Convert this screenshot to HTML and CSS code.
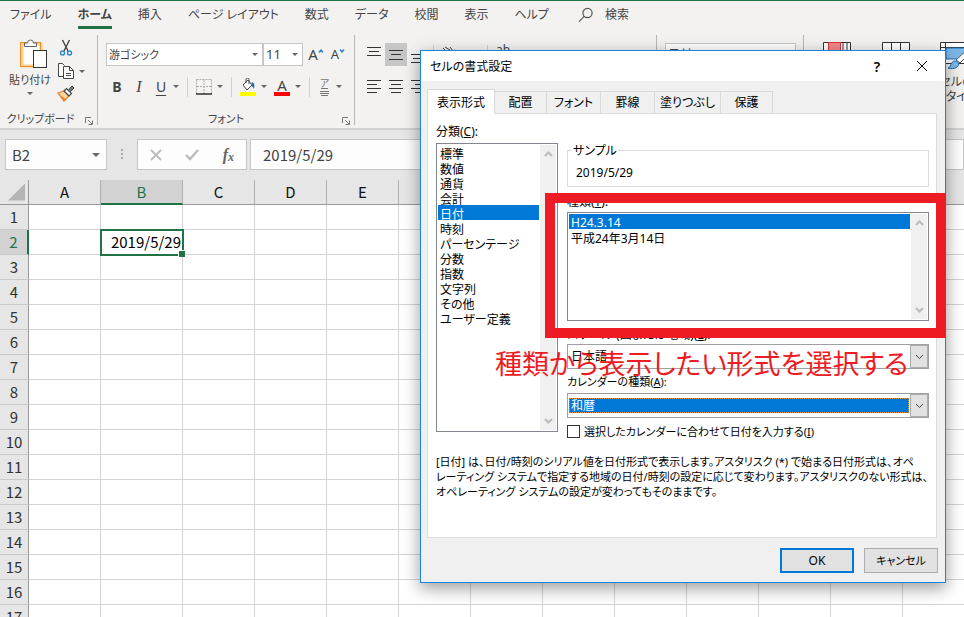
FILE: index.html
```html
<!DOCTYPE html>
<html lang="ja">
<head>
<meta charset="utf-8">
<title>セルの書式設定</title>
<link rel="stylesheet" href="styles.css">
</head>
<body>
<div class="app">
  <nav class="menu">
    <button>ファイル</button>
    <button class="current">ホーム</button>
    <button>挿入</button>
    <button>ページ レイアウト</button>
    <button>数式</button>
    <button>データ</button>
    <button>校閲</button>
    <button>表示</button>
    <button>ヘルプ</button>
    <button class="search"><svg width="16" height="16" viewBox="0 0 16 16" fill="none" stroke="#555" stroke-width="1.2"><circle cx="9.500" cy="6" r="4.600"/><path d="M6.200 9.300L1 14.600"/></svg>検索</button>
  </nav>

  <div class="ribbon">
    <section class="group clipboard">
      <div class="group-body">
        <button class="paste">
          <svg width="30" height="32" viewBox="0 0 30 32" fill="none"><rect x="2" y="5" width="19" height="22" fill="#fff" stroke="#f9d08b" stroke-width="3"/><rect x=".5" y="3.500" width="20" height="24" stroke="#e8912d"/><path d="M4.500 7.500V4h3a3 3 0 0 1 6 0h3v3.500z" fill="#fff" stroke="#666"/><rect x="13.500" y="11.500" width="13" height="17" fill="#fff" stroke="#333"/></svg>
          <span>貼り付け</span><i class="caret"></i>
        </button>
        <div class="clip-tools">
          <button aria-label="切り取り"><svg width="16" height="18" viewBox="0 0 16 18" fill="none"><path d="M4.500 1L10 12M11.500 1L6 12" stroke="#444" stroke-width="1.400"/><circle cx="4.500" cy="14" r="2" stroke="#2b88c8" stroke-width="1.400"/><circle cx="11.500" cy="14" r="2" stroke="#2b88c8" stroke-width="1.400"/></svg></button>
          <button aria-label="コピー"><svg width="18" height="18" viewBox="0 0 18 18" fill="#fff" stroke="#444"><path d="M6 14.500H1.500v-13h4l2 2"/><path d="M6.500 4.500h6l4 4v8h-10z"/><path d="M12.500 4.500v4h4M9 11.500h5M9 13.500h5" fill="none"/></svg><i class="caret"></i></button>
          <button aria-label="書式のコピー"><svg width="18" height="18" viewBox="0 0 18 18"><path d="M1 8l6-2 5 5-5 5z" fill="#fbd9a5" stroke="#e8832d" stroke-width="1.300"/><path d="M3 10.500l6 3.500-2 2z" fill="#e8832d"/><path d="M7 6l2.500-2.500 5 5L12 11z" fill="#fff" stroke="#444" stroke-width="1.200"/><path d="M11 5.500L15 1l2 2-4 4" fill="#777" stroke="#444"/></svg></button>
        </div>
      </div>
      <div class="group-label">クリップボード</div>
      <svg class="launcher" width="8" height="8" viewBox="0 0 8 8" fill="none" stroke="#777"><path d="M.5 6V.5H6M3 3l4 4M7.500 3.500v4h-4"/></svg>
    </section>

    <section class="group font">
      <div class="row">
        <span class="combo family"><select aria-label="フォント"><option>游ゴシック</option></select><i class="caret"></i></span>
        <span class="combo size"><select aria-label="サイズ"><option>11</option></select><i class="caret"></i></span>
        <button class="grow">A<svg width="6" height="4" viewBox="0 0 6 4" fill="none" stroke="#2b88c8" stroke-width="1.500"><path d="M1 3.500l2-2.500 2 2.500"/></svg></button>
        <button class="grow small">A<svg width="6" height="4" viewBox="0 0 6 4" fill="none" stroke="#2b88c8" stroke-width="1.500"><path d="M1 .5l2 2.500L5 .5"/></svg></button>
      </div>
      <div class="row styles">
        <button class="bold">B</button><button class="italic">I</button><button class="underline">U</button><i class="caret"></i>
        <i class="rule"></i>
        <button aria-label="罫線"><svg width="16" height="16" viewBox="0 0 16 16" fill="none" stroke="#aaa"><path d="M.5 .5h15M.5 .5v14M15.500 .5v14M8 1v14M1 7.500h14" stroke-dasharray="2 1"/><path d="M0 15h16" stroke="#222" stroke-width="1.400"/></svg></button><i class="caret"></i>
        <i class="rule"></i>
        <button aria-label="塗りつぶしの色"><svg width="16" height="18" viewBox="0 0 16 18" fill="none"><path d="M3 7l5-5 4 5-5 5zM6 5V1.500a1.500 1.500 0 0 1 3 0V6" fill="#fff" stroke="#444"/><path d="M12 4c2 1 3 3 2 7-1-2-2-3-3-3z" fill="#1e6fb5"/><rect y="14" width="16" height="4" fill="#ff0"/></svg></button><i class="caret"></i>
        <button class="color">A</button><i class="caret"></i>
        <i class="rule"></i>
        <button class="ruby"><span>ア</span><svg width="9" height="8" viewBox="0 0 9 8" stroke="#777"><path d="M1 .5h7M0 3.500h9M0 5.500h9M1 7.500h7"/></svg></button><i class="caret"></i>
      </div>
      <div class="group-label">フォント</div>
      <svg class="launcher" width="8" height="8" viewBox="0 0 8 8" fill="none" stroke="#777"><path d="M.5 6V.5H6M3 3l4 4M7.500 3.500v4h-4"/></svg>
    </section>

    <section class="group align">
      <div class="row">
        <button aria-label="上揃え"><svg width="14" height="18" viewBox="0 0 14 18" stroke="#333"><path d="M0 1.500h14M2 5.500h10M0 9.500h14"/></svg></button>
        <button class="pressed" aria-label="上下中央揃え"><svg width="14" height="18" viewBox="0 0 14 18" stroke="#333"><path d="M0 4.500h14M2 8.500h10M0 13.500h14"/></svg></button>
        <button aria-label="下揃え"><svg width="14" height="18" viewBox="0 0 14 18" stroke="#333"><path d="M0 8.500h14M2 12.500h10M0 16.500h14"/></svg></button>
        <i class="rule"></i>
        <button class="letters" aria-label="方向"><svg width="14" height="14" viewBox="0 0 14 14" fill="none" stroke="#444"><path d="M1 5l4 4M3 4l5 3M8 4l3 4M5 13L13 7"/></svg></button>
        <i class="rule far"></i>
        <button class="letters">ab</button>
      </div>
      <div class="row styles">
        <button aria-label="左揃え"><svg width="14" height="14" viewBox="0 0 14 14" stroke="#333"><path d="M0 .5h14M0 4.500h10M0 8.500h14M0 12.500h10"/></svg></button>
        <button aria-label="中央揃え"><svg width="14" height="14" viewBox="0 0 14 14" stroke="#333"><path d="M0 .5h14M2 4.500h10M0 8.500h14M2 12.500h10"/></svg></button>
        <button aria-label="右揃え"><svg width="14" height="14" viewBox="0 0 14 14" stroke="#333"><path d="M0 .5h14M4 4.500h10M0 8.500h14M4 12.500h10"/></svg></button>
      </div>
    </section>

    <section class="group number">
      <span class="combo"><select aria-label="数値の書式"><option>日付</option></select></span>
    </section>

    <section class="group looks">
      <svg width="28" height="28" viewBox="0 0 28 28" fill="#fff" stroke="#333"><path d="M.5 .5h27v26H.5zM20 1v26M24 1v26M1 9h26"/><rect x="5.500" y=".5" width="12" height="26" fill="#f4868b" stroke="#d33"/></svg>
      <svg width="28" height="28" viewBox="0 0 28 28" fill="#fff" stroke="#333"><path d="M.5 .5h27v26H.5zM9.500 1v26M18.500 1v26"/><path d="M9 8.500h19v18H9z" fill="#7db8e8" stroke="#1e6fb5"/></svg>
      <button class="cell-style"><svg width="34" height="28" viewBox="0 0 34 28" fill="#fff" stroke="#333"><path d="M.5 .5h33v21H.5zM5.500 1v20M0 5.500h33"/><path d="M6 6h27v11H6z" fill="#7db8e8" stroke="#1e6fb5"/><path d="M16 18L29 6l3 3-12 12z" stroke="#555"/><path d="M8 26c3 0 2-7 7-7 4 0 5 4 2 6s-6 2-9 1z" fill="#7db8e8" stroke="#1e6fb5"/></svg><span>セルの</span><span>スタイル</span></button>
    </section>
  </div>

  <div class="formula">
    <label class="name-box"><input value="B2" aria-label="名前ボックス"><i class="caret"></i></label>
    <i class="dots"></i>
    <div class="entry">
      <button aria-label="キャンセル"><svg width="12" height="12" viewBox="0 0 12 12" stroke="#bbb" stroke-width="1.800"><path d="M1 1l10 10M11 1L1 11"/></svg></button>
      <button aria-label="入力"><svg width="14" height="12" viewBox="0 0 14 12" fill="none" stroke="#bbb" stroke-width="2.400"><path d="M1 6l4 4L13 1"/></svg></button>
      <button class="fx">f<small>x</small></button>
    </div>
    <input class="content" value="2019/5/29" aria-label="数式バー">
  </div>

  <table class="sheet">
    <colgroup><col class="index"><col><col class="wide"><col><col><col><col><col><col><col><col><col><col><col></colgroup>
    <thead><tr><th class="corner"></th><th>A</th><th class="on">B</th><th>C</th><th>D</th><th>E</th><th>F</th><th>G</th><th>H</th><th>I</th><th>J</th><th>K</th><th>L</th><th>M</th></tr></thead>
    <tbody id="rows"></tbody>
  </table>
</div>

<form class="dialog" onsubmit="return false">
  <header class="title"><h1>セルの書式設定</h1><button type="button" class="help">?</button><button type="button" aria-label="閉じる"><svg width="12" height="12" viewBox="0 0 12 12" stroke="#000"><path d="M1 1l10 10M11 1L1 11"/></svg></button></header>
  <div class="tabs"><button type="button" class="active">表示形式</button><button type="button">配置</button><button type="button" class="mid">フォント</button><button type="button" class="mid">罫線</button><button type="button" class="long">塗りつぶし</button><button type="button">保護</button></div>
  <div class="panel">
    <div class="columns">
      <div class="left">
        <label for="category">分類(<u>C</u>):</label>
        <div class="listbox tall">
          <select id="category" size="12"><option>標準</option><option>数値</option><option>通貨</option><option>会計</option><option selected>日付</option><option>時刻</option><option>パーセンテージ</option><option>分数</option><option>指数</option><option>文字列</option><option>その他</option><option>ユーザー定義</option></select>
          <div class="bar"><svg width="9" height="6" viewBox="0 0 9 6"><path d="M1 5l3.500-3.500L8 5"/></svg><svg width="9" height="6" viewBox="0 0 9 6"><path d="M1 1l3.500 3.500L8 1"/></svg></div>
        </div>
      </div>
      <div class="right">
        <fieldset><legend>サンプル</legend>2019/5/29</fieldset>
        <label for="kind">種類(<u>T</u>):</label>
        <div class="listbox">
          <select id="kind" size="7"><option selected>H24.3.14</option><option>平成24年3月14日</option></select>
          <div class="bar"><svg width="9" height="6" viewBox="0 0 9 6"><path d="M1 5l3.500-3.500L8 5"/></svg><svg width="9" height="6" viewBox="0 0 9 6"><path d="M1 1l3.500 3.500L8 1"/></svg></div>
        </div>
        <label for="locale" class="locale">ロケール (国または地域)(<u>L</u>):</label>
        <div class="drop"><select id="locale"><option>日本語</option></select><i><svg width="9" height="6" viewBox="0 0 9 6"><path d="M1 1l3.500 3.500L8 1"/></svg></i></div>
        <label for="calendar" class="compact">カレンダーの種類(<u>A</u>):</label>
        <div class="drop focus"><select id="calendar"><option>和暦</option></select><i><svg width="9" height="6" viewBox="0 0 9 6"><path d="M1 1l3.500 3.500L8 1"/></svg></i></div>
        <label class="check compact"><input type="checkbox"><span>選択したカレンダーに合わせて日付を入力する(<u>I</u>)</span></label>
      </div>
    </div>
    <p class="compact">[日付] は、日付/時刻のシリアル値を日付形式で表示します。アスタリスク (*) で始まる日付形式は、オペ<br>レーティング システムで指定する地域の日付/時刻の設定に応じて変わります。アスタリスクのない形式は、<br>オペレーティング システムの設定が変わってもそのままです。</p>
  </div>
  <footer><button class="default">OK</button><button type="button" class="compact">キャンセル</button></footer>
</form>
<div class="highlight"></div>
<div class="note">種類から表示したい形式を選択する</div>
<script src="sheet.js"></script>
</body>
</html>
```
FILE: styles.css
```css
* { box-sizing: border-box; }
body {
  margin: 0; height: 100vh; overflow: hidden; position: relative; background: #fff;
  font: 12px/15px "Noto Sans", "Noto Sans CJK JP", sans-serif;
  font-feature-settings: "palt"; color: #000;
}
button, input, select { font: inherit; font-feature-settings: inherit; color: inherit; margin: 0; padding: 0; border: 0; background: none; border-radius: 0; outline: 0; }
button { display: flex; align-items: center; justify-content: center; flex: none; white-space: nowrap; }
select { appearance: none; }
svg { display: block; flex: none; }
.caret { flex: none; border: 3px solid transparent; border-top-color: #666; border-bottom: 0; }
.compact { font-size: 11px; }

.app { height: 100%; overflow: hidden; }
.menu { display: flex; gap: 26px; height: 35px; padding: 0 10px; border-top: 1px solid #217346; background: #f3f2f1; color: #444; font-size: 12px; line-height: 20px; }
.menu button { height: 28px; padding-top: 3px; border-bottom: 3px solid transparent; }
.menu .current { border-color: #217346; font-weight: bold; }
.menu .search { gap: 11px; padding-left: 3px; }

.ribbon { display: flex; height: 95px; background: #f3f2f1; border-bottom: 2px solid #d2d2d2; color: #444; overflow: hidden; }
.group { position: relative; flex: none; border-right: 1px solid #b8b6b4; height: 90px; }
.group-label { position: absolute; left: 0; right: 0; bottom: -2px; text-align: center; font-size: 11px; line-height: 16px; }
.launcher { position: absolute; right: 4px; bottom: 0; }
.clipboard { width: 98px; }
.clipboard .group-label { right: 16px; }
.group-body { display: flex; padding: 4px 0 0 9px; gap: 6px; }
.paste { flex-direction: column; line-height: 16px; font-size: 11px; justify-content: flex-start; width: 42px; }
.paste svg { margin-left: 10px; }
.paste span { margin: 1px 0 4px; }
.clip-tools { display: flex; flex-direction: column; gap: 5px; align-items: flex-start; }
.clip-tools button { gap: 4px; min-width: 18px; }
.font { width: 257px; padding: 8px 0 0 8px; }
.row { display: flex; align-items: center; height: 23px; }
.combo { display: flex; align-items: center; height: 23px; background: #fff; border: 1px solid #c6c6c6; padding-right: 4px; }
.combo select { flex: 1; min-width: 0; padding-left: 2px; }
.family { width: 157px; }
.family select { font-size: 11px; }
.size { width: 40px; }
.size select { font-size: 13px; }
.grow { font-size: 15px; width: 22px; margin-left: 2px; }
.grow svg { align-self: flex-start; margin-top: 2px; }
.grow.small { font-size: 13px; margin-left: 0; }
.styles { margin-top: 9px; }
.bold, .italic, .underline { width: 22px; height: 22px; font-size: 14px; }
.bold { font-weight: bold; }
.italic { font-family: "Liberation Serif", serif; font-style: italic; font-size: 16px; }
.underline { text-decoration: underline; text-underline-offset: 3px; }
.rule { width: 1px; height: 20px; background: #d0d0d0; margin: 0 8px; flex: none; }
.styles button + .caret { margin-left: 5px; }
.font .underline + .caret { margin-left: 1px; }
.caret + .color { margin-left: 7px; }
.color { width: 16px; height: 18px; border-bottom: 4px solid #f00; font-size: 15px; line-height: 14px; }
.ruby { flex-direction: column; width: 13px; font-size: 10px; line-height: 10px; color: #777; }
.ruby + .caret { margin-left: 9px; }
.align { width: 302px; padding: 8px 0 0 8px; }
.align .row button { width: 22px; height: 23px; }
.align .pressed { background: #c6c6c6; }
.align .rule { margin: 0 4px; }
.align .row .letters { align-items: flex-start; line-height: 14px; }
.align .far { margin-left: 27px; }
.number { width: 147px; padding: 8px 7px 0 8px; }
.looks { display: flex; align-items: flex-start; gap: 31px; padding: 7px 0 0 19px; border: 0; }
.cell-style { flex-direction: column; margin-left: -6px; }
.cell-style svg { margin-bottom: 4px; }

.formula { display: flex; height: 50px; padding: 9px 0 10px 5px; background: #e6e6e6; color: #444; font: 15px/20px "Noto Sans CJK JP", sans-serif; }
.name-box { display: flex; align-items: center; width: 102px; padding: 0 6px; background: #fdfdfd; border: 1px solid #c6c6c6; }
.name-box input { flex: 1; min-width: 0; }
.name-box .caret { border-width: 4px 4px 0; }
.dots { width: 2px; height: 11px; margin: 10px 14px 0; background: repeating-linear-gradient(#aaa 0 2px, transparent 2px 4px); }
.entry { display: flex; justify-content: space-between; width: 110px; padding: 0 12px; background: #fdfdfd; border: 1px solid #c6c6c6; }
.fx { font: italic bold 16px/20px "Liberation Serif", serif; color: #666; }
.fx small { font-size: 12px; margin-top: 4px; }
.content { flex: 1; min-width: 0; margin-left: 3px; padding-left: 12px; background: #fdfdfd; border: 1px solid #c6c6c6; }

.sheet { table-layout: fixed; width: max-content; border-spacing: 0; font: 15px/20px "Noto Sans CJK JP", sans-serif; }
col { width: 72px; }
col.index { width: 29px; }
col.wide { width: 82px; }
th, td { padding: 0; height: 25px; border: 0 solid #d4d4d4; border-width: 0 1px 1px 0; overflow: hidden; }
th { background: #e6e6e6; font-weight: normal; color: #333; }
thead th { border-color: #b0b0b0; border-bottom-color: #999; color: #111; }
thead .on { background: #d2d2d2; color: #217346; border-bottom: 2px solid #217346; }
.corner { border-right-color: #999; }
.corner::after { content: ""; display: block; width: 17px; height: 17px; margin-left: 8px; background: #b4b4b4; clip-path: polygon(100% 0, 100% 100%, 0 100%); }
tbody th { border-color: #c9c9c9; border-right-color: #999; }
tbody .on { background: #d2d2d2; color: #217346; border-right: 2px solid #217346; }
.picked { position: relative; overflow: visible; text-align: right; padding-right: 1px; outline: 2px solid #217346; outline-offset: -1px; white-space: nowrap; }
.picked::after { content: ""; position: absolute; right: -3px; bottom: -3px; width: 6px; height: 6px; background: #217346; border: 1px solid #fff; border-width: 1px 0 0 1px; }

.dialog { position: absolute; left: 420px; top: 50px; width: 526px; background: #f0f0f0; border: 1px solid #1883d7; box-shadow: 0 5px 16px rgba(0, 0, 0, .4); }
.title { display: flex; align-items: center; height: 30px; padding: 0 9px; background: #fff; }
.title h1 { flex: 1; margin: 0; font-size: 12px; font-weight: normal; }
.title button { width: 28px; height: 28px; }
.title .help { margin-right: 17px; font-size: 14px; font-weight: 600; }
.tabs { display: flex; align-items: flex-end; height: 32px; padding-left: 6px; }
.tabs button { width: 52px; height: 22px; border: 1px solid #d9d9d9; border-left: 0; border-bottom: 0; }
.tabs .mid { width: 54px; }
.tabs .long { width: 66px; }
.tabs .active { width: 68px; height: 25px; border-left: 1px solid #d9d9d9; background: #fff; margin-bottom: -1px; position: relative; }
.panel { height: 425px; margin: 0 8px 0 6px; padding: 10px 7px 0 8px; background: #fff; border: 1px solid #dcdcdc; }
.columns { display: flex; gap: 9px; }
.panel label { display: block; white-space: nowrap; }
.left { width: 122px; flex: none; }
.left label { margin-bottom: 4px; }
.right { flex: 1; min-width: 0; }
.listbox { display: flex; height: 109px; padding: 1px; border: 1px solid #828790; background: #fff; }
.listbox.tall { height: 289px; }
.listbox select { flex: 1; min-width: 0; height: 100%; overflow: hidden; }
.listbox option { padding: 0 2px; height: 15px; min-height: 15px; line-height: 12px; color: #000; }
.listbox option:checked { background: #0078d7 linear-gradient(#0078d7, #0078d7); color: #fff; -webkit-text-fill-color: #fff; }
.bar { display: flex; flex-direction: column; justify-content: space-between; align-items: center; width: 16px; margin-left: 1px; padding: 6px 0; background: #f0f0f0; }
.bar path { fill: none; stroke: #bbb; stroke-width: 2; }
fieldset { height: 44px; margin: 19px 0 7px; padding: 7px 8px 0; border: 1px solid #dcdcdc; }
legend { padding: 0 1px; margin-left: -4px; height: 15px; }
.right > .listbox { margin-top: 3px; }
.locale { margin-top: 6px; }
.drop { display: flex; height: 25px; margin: 2px 0 5px; border: 1px solid #a0a0a0; background: #fff; }
.drop select { flex: 1; min-width: 0; padding-left: 2px; margin: 3px 0 3px 1px; }
.drop i { display: flex; align-items: center; justify-content: center; width: 18px; background: #e1e1e1; border: 1px solid #adadad; }
.drop path { fill: none; stroke: #444; }
.drop.focus { margin: 4px 0 6px; }
.focus select { margin: 4px 1px 4px 1px; background: #0078d7; color: #fff; outline: 1px dotted #e8912d; outline-offset: -1px; }
.panel .check { display: flex; align-items: center; gap: 4px; }
.check input { appearance: none; width: 13px; height: 13px; border: 1px solid #333; background: #fff; flex: none; }
.panel p { margin: 15px 0 0; white-space: nowrap; }
footer { display: flex; justify-content: flex-end; gap: 10px; padding: 10px 7px 9px; }
footer button { width: 74px; height: 25px; background: #e1e1e1; border: 1px solid #adadad; }
footer .default { border: 2px solid #0078d7; }

.highlight { position: absolute; left: 545px; top: 193px; width: 401px; height: 145px; border: 10px solid #ed1c24; }
.note { position: absolute; left: 495px; top: 344px; font: 27px/38px "Noto Sans CJK JP", sans-serif; font-feature-settings: "palt"; color: #ed1c24; white-space: nowrap; }
```
FILE: sheet.js
```js
const rows = document.getElementById("rows");
for (let r = 1; r <= 17; r++) {
  const tr = rows.insertRow();
  const th = document.createElement("th");
  th.textContent = r;
  if (r === 2) th.className = "on";
  tr.append(th);
  for (let c = 1; c <= 13; c++) {
    const td = tr.insertCell();
    if (r === 2 && c === 2) {
      td.className = "picked";
      td.textContent = "2019/5/29";
    }
  }
}
```
